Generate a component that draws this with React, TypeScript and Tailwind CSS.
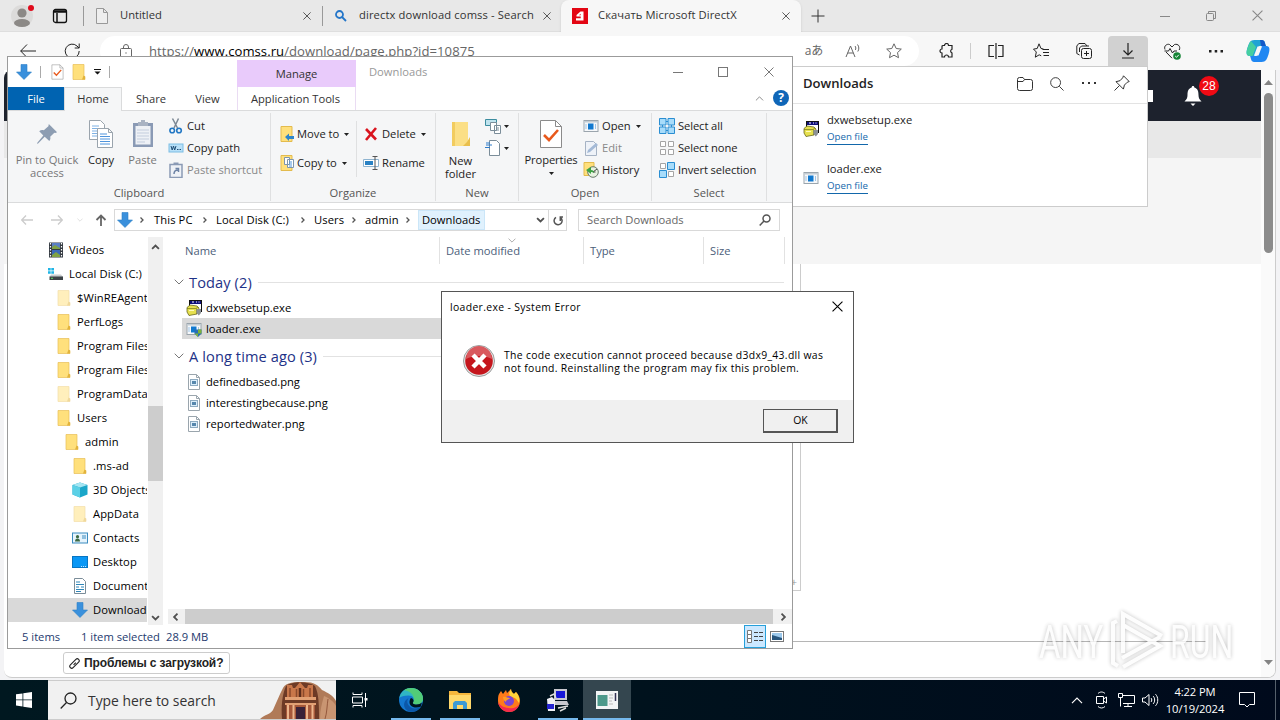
import React from 'react';
import clsx from 'clsx';

interface IconProps {
  className?: string;
}

interface ITreeItem {
  label: string;
  indent: string;
  icon: React.ReactNode;
  selected?: boolean;
}

const CloseIcon: React.FC<IconProps> = ({ className }) => (
  <svg viewBox="0 0 10 10" className={clsx('shrink-0', className)} fill="none" stroke="currentColor">
    <path d="M.5.5l9 9M9.5.5l-9 9" />
  </svg>
);

const Caret: React.FC<IconProps> = ({ className }) => (
  <svg viewBox="0 0 5 3" className={clsx('w-[5px] h-[3px] shrink-0', className)}>
    <path d="M0 0h5L2.500 3z" fill="currentColor" />
  </svg>
);

const DownloadArrow: React.FC<IconProps> = ({ className }) => (
  <svg viewBox="0 0 16 16" className={clsx('w-4 h-4 shrink-0', className)}>
    <path d="M5 .5h6V8h4.500L8 15.500.5 8H5z" fill="#3a90dc" stroke="#2d7fc8" strokeWidth=".6" />
  </svg>
);

const Folder: React.FC<{ faded?: boolean }> = ({ faded }) => (
  <svg viewBox="0 0 16 16" className={clsx('w-4 h-4 shrink-0', faded && 'opacity-50')}>
    <path d="M2 .5h11v12h1V15.500H2z" fill="#ffe07c" stroke="#e8bf56" strokeWidth=".7" />
    <path d="M12.500 11.500l1.500 1v3h-3z" fill="#e2b33c" />
  </svg>
);

const ImageFile = () => (
  <svg viewBox="0 0 16 16" className="w-4 h-4 shrink-0">
    <path d="M2.500.5h8l3 3v12h-11z" fill="#fff" stroke="#9aa5ad" />
    <path d="M10.500.5v3h3" fill="none" stroke="#9aa5ad" />
    <rect x="4.500" y="5.500" width="7" height="6" fill="#dceefa" stroke="#8eabc1" />
    <path d="M6 7h4v3H6z" fill="#5687ad" />
  </svg>
);

const SetupFile = () => (
  <svg viewBox="0 0 16 16" className="w-4 h-4 shrink-0">
    <rect x="3.500" y=".5" width="12" height="11" fill="#fff" stroke="#111" />
    <path d="M4 1h11v3H4z" fill="#10107b" />
    <path d="M6 2h2M10 2h1M12.500 2h1" stroke="#fff" />
    <path d="M1 7.500L4 5l7 1 2 2-2 6-8 1.500L1 12z" fill="#e6e04e" stroke="#55550f" strokeWidth=".7" />
    <path d="M1 8.500h9l2-1.500M10.500 8.500V14" fill="none" stroke="#77771a" strokeWidth=".7" />
    <path d="M3 10.500h5" stroke="#fffbb8" />
    <path d="M10.500 9H15v4l-2.200 2.500-2.300-2.500z" fill="#8c9196" />
  </svg>
);

const AppFile: React.FC<{ shield?: boolean }> = ({ shield }) => (
  <svg viewBox="0 0 16 16" className="w-4 h-4 shrink-0">
    <rect x="1" y="2.500" width="14" height="11" fill="#f6f8fa" stroke="#9ba5ad" />
    <path d="M1 3h14v1.500H1z" fill="#c3ccd3" />
    <rect x="5" y="5.500" width="5.500" height="6" fill="#1179cf" />
    <path d="M3 6v5M12.500 6v5" stroke="#9fc5e6" />
    {shield && (
      <>
        <path d="M8.500 8.500h7v4L12 16l-3.500-3.500z" fill="#2a6cb8" />
        <path d="M12 8.500h3.500v4H12zM8.500 12.500H12V16z" fill="#7cb339" />
      </>
    )}
  </svg>
);

const Chevron: React.FC<IconProps> = ({ className }) => (
  <svg viewBox="0 0 10 6" className={clsx('shrink-0', className)} fill="none" stroke="currentColor">
    <path d="M.7.7L5 5 9.300.7" />
  </svg>
);

const ScrollChevron: React.FC<IconProps> = ({ className }) => (
  <svg viewBox="0 0 10 6" className={clsx('w-[9px] h-[6px] shrink-0', className)} fill="none" stroke="#505050" strokeWidth="2">
    <path d="M1.200.8L5 4.600 8.800.8" />
  </svg>
);

const Tick = () => (
  <svg viewBox="0 0 24 30" className="w-full h-full">
    <path d="M1.500 1.500h15l6 6v21h-21z" fill="#fff" stroke="#8b8b8b" />
    <path d="M16.500 1.500v6h6" fill="none" stroke="#8b8b8b" />
    <path d="M5 16l5 5 9-10" fill="none" stroke="#e8591c" strokeWidth="2.600" />
  </svg>
);

const treeItems: ITreeItem[] = [
  {
    label: 'Videos',
    indent: 'pl-10',
    icon: (
      <svg viewBox="0 0 16 16" className="w-4 h-4 shrink-0">
        <path d="M1 .5h14v15H1z" fill="#333941" />
        <path d="M4 1h8v6H4z" fill="#5b7fc4" />
        <path d="M4 8h8v7H4z" fill="#3b69b8" />
        <path d="M4 5l3-2 5 3v1H4zM4 13l4-3 4 3v2H4z" fill="#80a243" />
        <path d="M2.500 1v14M13.500 1v14" stroke="#fff" strokeWidth="1.200" strokeDasharray="1.500 1.500" />
      </svg>
    ),
  },
  {
    label: 'Local Disk (C:)',
    indent: 'pl-10',
    icon: (
      <svg viewBox="0 0 16 16" className="w-4 h-4 shrink-0">
        <path d="M0 2h2.700v2.500H0zM3.300 2H6v2.500H3.300zM0 5.200h2.700v2.500H0zM3.300 5.200H6v2.500H3.300z" fill="#1fb5e6" />
        <path d="M3 8.500h10l2 2.500H1.500z" fill="#c8ccce" />
        <path d="M1.500 10.500h13.500v3.500H1.500z" fill="#3d4347" />
        <path d="M3 12.300h2" stroke="#5fdf62" />
      </svg>
    ),
  },
  { label: '$WinREAgent', indent: 'pl-12', icon: <Folder faded /> },
  { label: 'PerfLogs', indent: 'pl-12', icon: <Folder /> },
  { label: 'Program Files', indent: 'pl-12', icon: <Folder /> },
  { label: 'Program Files (x86)', indent: 'pl-12', icon: <Folder /> },
  { label: 'ProgramData', indent: 'pl-12', icon: <Folder faded /> },
  { label: 'Users', indent: 'pl-12', icon: <Folder /> },
  { label: 'admin', indent: 'pl-14', icon: <Folder /> },
  { label: '.ms-ad', indent: 'pl-16', icon: <Folder /> },
  {
    label: '3D Objects',
    indent: 'pl-16',
    icon: (
      <svg viewBox="0 0 16 16" className="w-4 h-4 shrink-0">
        <path d="M8 .5l7.500 2.500v9.500L8 15.500.5 12.500V3z" fill="#1aa6c9" />
        <path d="M8 .5l7.500 2.500L8 5.500.5 3z" fill="#a5e5f2" />
        <path d="M.5 3L8 5.500v10L.5 12.500z" fill="#5bd0e6" />
      </svg>
    ),
  },
  { label: 'AppData', indent: 'pl-16', icon: <Folder faded /> },
  {
    label: 'Contacts',
    indent: 'pl-16',
    icon: (
      <svg viewBox="0 0 16 16" className="w-4 h-4 shrink-0">
        <rect x=".5" y="3" width="15" height="10" fill="#e5f3fc" stroke="#3b8bbf" />
        <path d="M3 11.500c0-2 1-3 2.500-3s2.500 1 2.500 3z" fill="#3c6a44" />
        <circle cx="5.500" cy="6.700" r="1.600" fill="#3c6a44" />
        <path d="M10 6h4M10 8h4" stroke="#3b8bbf" />
      </svg>
    ),
  },
  {
    label: 'Desktop',
    indent: 'pl-16',
    icon: (
      <svg viewBox="0 0 16 16" className="w-4 h-4 shrink-0">
        <rect x=".5" y="2.500" width="15" height="11" fill="#0a97f5" stroke="#0875c2" />
        <path d="M9 12.500h5" stroke="#bfe4ff" strokeDasharray="1 1" />
      </svg>
    ),
  },
  {
    label: 'Documents',
    indent: 'pl-16',
    icon: (
      <svg viewBox="0 0 16 16" className="w-4 h-4 shrink-0">
        <path d="M2.500.5h8l3 3v12h-11z" fill="#fff" stroke="#7b8d99" />
        <path d="M4 4h4M4 6.500h8M4 9h3M9 9h3M4 11.500h8M4 13.500h5" stroke="#2f86b8" />
      </svg>
    ),
  },
  { label: 'Downloads', indent: 'pl-16', icon: <DownloadArrow />, selected: true },
];

const TabBar = () => (
  <div className="flex items-center h-8 shrink-0 bg-[#e8e8e8] text-[11.2px] text-[#333] border-b border-[#dedede]">
    <div className="w-[83px] flex items-center">
      <svg viewBox="0 0 24 24" className="w-6 h-6 ml-[10px]">
        <circle cx="12" cy="12" r="11" fill="#dcdbda" />
        <circle cx="12" cy="9" r="4.600" fill="#8c8986" />
        <ellipse cx="12" cy="19" rx="8" ry="4" fill="#8c8986" />
        <circle cx="21" cy="4" r="3" fill="#e00b1c" />
      </svg>
      <svg viewBox="0 0 16 16" className="w-4 h-4 ml-[18px]" fill="none" stroke="#111" strokeWidth="1.300">
        <rect x="1.500" y="1.500" width="13" height="13" rx="2" />
        <path d="M1.500 3.500h13" strokeWidth="2.500" />
        <path d="M5 5v9" strokeWidth="1.500" />
      </svg>
    </div>
    <div className="w-[239px] h-5 flex items-center border-l border-[#999]">
      <svg viewBox="0 0 12 16" className="w-3 h-4 ml-3" fill="#eee" stroke="#999">
        <path d="M.5.5h7l4 4v11H.5zM7.500.5v4h4" />
      </svg>
      <span className="ml-3 flex-1">Untitled</span>
      <CloseIcon className="w-2 h-2 mr-[11px]" />
    </div>
    <div className="w-[239px] h-5 flex items-center border-l border-[#999]">
      <svg viewBox="0 0 12 12" className="w-3 h-3 ml-3" fill="none" stroke="#2476c9" strokeWidth="1.800">
        <circle cx="4.500" cy="4.500" r="3.500" />
        <path d="M7 7l4 4" />
      </svg>
      <span className="ml-3 flex-1 whitespace-nowrap tracking-[0.12px]">directx download comss - Search</span>
      <CloseIcon className="w-2 h-2 mr-[10px]" />
    </div>
    <div className="w-[240px] h-8 flex items-center bg-[#f7f7f7] rounded-t-lg shadow-sm">
      <svg viewBox="0 0 16 16" className="w-4 h-4 ml-[11px]">
        <path d="M0 0h16v16H0z" fill="#e30613" />
        <path d="M4 12.500h7.500V3.500H8.500L4.500 7v1.500h4.200v1.700H4z" fill="#fff" />
        <path d="M7 7.200l1.700-1.500v1.500z" fill="#e30613" />
      </svg>
      <span className="ml-[10px] flex-1 whitespace-nowrap tracking-[0.08px]">Скачать Microsoft DirectX</span>
      <CloseIcon className="w-2 h-2 mr-[11px]" />
    </div>
    <svg viewBox="0 0 14 14" className="w-[14px] h-[14px] ml-[10px]" stroke="#333">
      <path d="M7 .5v13M.5 7h13" />
    </svg>
    <div className="ml-auto flex items-center text-[#888]">
      <svg viewBox="0 0 10 10" className="w-[10px] h-[10px]" stroke="currentColor">
        <path d="M0 5.500h10" />
      </svg>
      <svg viewBox="0 0 10 10" className="w-[10px] h-[10px] ml-9" fill="none" stroke="currentColor">
        <rect x=".5" y="2.500" width="7" height="7" rx="1" />
        <path d="M2.500 2V.5h7v7H8" />
      </svg>
      <CloseIcon className="w-[11px] h-[11px] ml-9 mr-[17px]" />
    </div>
  </div>
);

const Toolbar = () => (
  <div className="flex h-[38px] shrink-0 items-center bg-[#f7f7f7] text-[#222]">
    <svg viewBox="0 0 16 14" className="w-4 h-[14px] ml-5" fill="none" stroke="currentColor">
      <path d="M7 .5L.7 7 7 13.500M.7 7H16" />
    </svg>
    <svg viewBox="0 0 16 16" className="w-4 h-4 ml-7" fill="none" stroke="currentColor">
      <path d="M15.200 8A7 7 0 1 1 13 3l2 2M15.200.5V5h-4.500" />
    </svg>
    <div className="ml-5 w-[819px] h-[30px] bg-white rounded-full flex items-center text-[#666]">
      <svg viewBox="0 0 12 14" className="w-3 h-[14px] ml-5" fill="none" stroke="currentColor">
        <rect x=".5" y="4.500" width="11" height="9" rx="1" />
        <path d="M3.500 4.500V3a2.500 2.500 0 0 1 5 0v1.500M6 8.300v1.400" />
      </svg>
      <span className="ml-[17px] mt-px flex-1 text-[13.100px] tracking-[0.05px]">
        https://<span className="text-black">www.comss.ru</span>/download/page.php?id=10875
      </span>
      <span className="w-10 text-center text-[12px]">aあ</span>
      <span className="w-10 flex justify-center">
        <svg viewBox="0 0 18 16" className="w-[18px] h-4" fill="none" stroke="currentColor">
          <path d="M1 14L5.500 3 10 14M2.700 10h5.600M10 3c1 1 1 3 .3 4M12.500 1.500c1.700 2 1.700 5 .3 7" />
        </svg>
      </span>
      <span className="w-10 flex justify-center mr-[5px]">
        <svg viewBox="0 0 16 16" className="w-4 h-4" fill="none" stroke="currentColor">
          <path d="M8 .8l2.200 4.700 5.100.6-3.800 3.500 1 5.100L8 12.200l-4.500 2.500 1-5.100L.7 6.100l5.100-.6z" />
        </svg>
      </span>
    </div>
    <div className="w-[52px] h-4 pl-[5px] border-r border-[#ccc] flex items-center justify-center">
      <svg viewBox="0 0 16 16" className="w-4 h-4" fill="none" stroke="currentColor" strokeWidth="1.200">
        <path d="M4 2.500h1.500a2 2 0 0 1 4 0H13v3.700a2 2 0 0 0 0 3.800v4H9.500a2 2 0 0 0-4 0H3V10a2 2 0 1 1 0-4V3.500a1 1 0 0 1 1-1z" />
      </svg>
    </div>
    <div className="w-[49px] flex justify-center">
      <svg viewBox="0 0 16 16" className="w-4 h-4" fill="none" stroke="currentColor" strokeWidth="1.200">
        <path d="M6 2.500H1v11h5M10 2.500h5v11h-5M8 0v16" />
      </svg>
    </div>
    <div className="w-[41px] flex justify-center">
      <svg viewBox="0 0 16 16" className="w-4 h-4" fill="none" stroke="currentColor">
        <path d="M10.500 6L8 5.500 6 .8 4.200 5.500l-3.700.6L3.300 9l-1 5.200 3.900-2.400 2 1M9.500 6.500H16M10 9.500h6M10.500 12.500H16" />
      </svg>
    </div>
    <div className="w-[47px] pr-[2px] flex justify-center">
      <svg viewBox="0 0 16 16" className="w-4 h-4" fill="none" stroke="currentColor">
        <rect x="5.500" y="5.500" width="10" height="10" rx="2" />
        <path d="M10.500 8v5M8 10.500h5M3.500 12L.8 10.500V3l2-2.500H9l2 2.500M3.500 9V5l2-2H13" />
      </svg>
    </div>
    <div className="w-10 h-[30px] bg-[#d1d1d1] rounded-t-sm flex items-center justify-center">
      <svg viewBox="0 0 14 16" className="w-[14px] h-4" fill="none" stroke="currentColor" strokeWidth="1.200">
        <path d="M7 0v11.500M2.500 7.500L7 12l4.500-4.500M1 15h12" />
      </svg>
    </div>
    <div className="w-[48px] flex justify-center">
      <svg viewBox="0 0 17 17" className="w-[17px] h-[17px]" fill="none" stroke="currentColor">
        <path d="M1 6.500C-.5 3 3 .5 5.500 1.500L8 4l2.500-2.500C14 .5 17 3.500 15.200 7M2 9l6 6.200M.5 8h4L6 5.500 8.500 10 10 8h3" />
        <circle cx="13" cy="13" r="3.800" fill="#168536" stroke="none" />
        <path d="M11.200 13l1.300 1.300 2.300-2.500" stroke="#fff" />
      </svg>
    </div>
    <div className="w-10 flex justify-center">
      <svg viewBox="0 0 14 3" className="w-[14px] h-[3px]" fill="currentColor">
        <path d="M0 0h2.500v2.500H0zM5.700 0h2.500v2.500H5.700zM11.500 0H14v2.500h-2.500z" />
      </svg>
    </div>
    <svg viewBox="0 0 24 24" className="w-6 h-6 ml-[10px]">
      <path d="M8.500 1H16c3 0 3 4 4 6h-5c-3 0-3.500 2-4.500 5s-1 5-4 5H3.500c-3.500 0-3.500-4-2-8.500S4 1 8.500 1z" fill="#1fa3d4" />
      <path d="M1 11c1-3 2-7 4-9l5 6-3.500 9h-3c-2.500 0-3.500-3-2.500-6z" fill="#45cfa0" />
      <path d="M15.500 23H8c-3 0-3-4-4-6h5c3 0 3.500-2 4.500-5s1-5 4-5h3c3.500 0 3.500 4 2 8.500S20 23 15.500 23z" fill="#2087f2" />
      <path d="M11.500 7.500H16l-3.500 9H8z" fill="#f7f7f7" />
      <path d="M14 1h2c3 0 3 4 4 6h-5z" fill="#1458c8" />
    </svg>
  </div>
);

const WebPage = () => (
  <div className="flex h-[610px] px-[4px] bg-[#f3f3f5]">
    <div className="flex h-[608px] w-[1272px] bg-white rounded-b-lg overflow-hidden border-b border-r border-[#ccc]">
      <div className="w-[1257px] flex flex-col">
        <div className="h-[51px] bg-[#1d222d] rounded-tl-lg flex justify-end items-center">
          <div className="w-[6px] h-3 bg-white" />
          <svg viewBox="0 0 18 20" className="w-[18px] h-5 ml-[31px] mr-[59px]" fill="#fff">
            <path d="M9 0c1 0 1.300.6 1.300 1.500C14 2.600 14.500 6 14.500 9c0 3 1 4.500 3 6.500H.5c2-2 3-3.500 3-6.500 0-3 .5-6.400 4.200-7.500C7.700.6 8 0 9 0zM6.500 17.500h5L9 20z" />
          </svg>
        </div>
        <div className="h-[37px] bg-[#e8e8e8]" />
        <div className="h-[106px] bg-[#f5f5f5]" />
        <div className="ml-[10px] w-[787px] h-[327px] border-r border-b border-[#ccc] flex items-end justify-end text-[#999] text-[11px] pr-[3px]">
          +
        </div>
        <div className="ml-[10px] w-[1192px] h-[51px] border-b border-[#b5b5b5]" />
        <div className="ml-[59px] mt-[10px] w-[167px] h-[22px] border border-[#ccc] rounded-[3px] flex items-center font-['Liberation_Sans',sans-serif] font-bold text-[12px] text-[#222]">
          <svg viewBox="0 0 12 12" className="w-[11px] h-[11px] ml-[5px] mr-[4px]" fill="none" stroke="#222" strokeWidth="1.200">
            <path d="M5 7.500L7.500 5M4.500 4.500L1.500 7.500a2.100 2.100 0 0 0 3 3L7.500 7.500M7.500 7.500l3-3a2.100 2.100 0 0 0-3-3L4.500 4.500" />
          </svg>
          <span className="whitespace-nowrap tracking-[-0.12px]">Проблемы с загрузкой?</span>
        </div>
      </div>
      <div className="w-[14px] bg-[#fafafa] flex flex-col items-center pt-[10px]">
        <svg viewBox="0 0 9 5" className="w-[9px] h-[5px]" fill="#848484">
          <path d="M0 5h9L4.500 0z" />
        </svg>
        <div className="w-[9px] h-[160px] mt-2 rounded-full bg-[#8b8b8b]" />
        <svg viewBox="0 0 9 5" className="w-[9px] h-[5px] mt-auto mb-[12px]" fill="#848484">
          <path d="M0 0h9L4.500 5z" />
        </svg>
      </div>
    </div>
  </div>
);

const DownloadEntry: React.FC<{ name: string; icon: React.ReactNode }> = ({ name, icon }) => (
  <div className="flex items-center h-[49px]">
    {icon}
    <div className="ml-2 flex flex-col items-start">
      <span className="text-[11.2px] leading-4 text-[#222]">{name}</span>
      <span className="mt-[2px] h-[15px] text-[9.7px] leading-[14px] text-[#1267ab] border-b border-[#1267ab]">
        Open file
      </span>
    </div>
  </div>
);

const DownloadsPopup = () => (
  <div className="absolute left-[787px] top-[66px] w-[361px] h-[141px] bg-white border border-[#ccc] pl-[15px]">
    <div className="-ml-[15px] pl-[15px] h-[37px] border-b border-[#e3e3e3] flex items-center text-[#333]">
      <span className="text-[13.1px] font-semibold text-[#222] pb-[3px]">Downloads</span>
      <svg viewBox="0 0 16 14" className="w-4 h-[14px] ml-auto mb-[2px]" fill="none" stroke="currentColor">
        <path d="M.5 2.500a2 2 0 0 1 2-2H6l1.500 2h6a2 2 0 0 1 2 2v7a2 2 0 0 1-2 2h-11a2 2 0 0 1-2-2zM.5 4.500H6l1.500-2" />
      </svg>
      <svg viewBox="0 0 15 15" className="w-[14px] h-[14px] ml-[17px] mb-[3px]" fill="none" stroke="currentColor">
        <circle cx="6" cy="6" r="5.300" />
        <path d="M10 10l4.500 4.500" />
      </svg>
      <svg viewBox="0 0 14 2" className="w-[14px] h-[2px] ml-[18px] mb-[5px]" fill="currentColor">
        <path d="M0 0h2v2H0zM6 0h2v2H6zM12 0h2v2h-2z" />
      </svg>
      <svg viewBox="0 0 16 16" className="w-4 h-4 ml-[18px] mr-[17px] mb-[4px]" fill="none" stroke="currentColor">
        <path d="M9.500.8l5.700 5.700-2 .8-2.800 2.800-1 4L2 6.700l4-1L8.700 2.800zM5.500 10.500L.5 15.500" />
      </svg>
    </div>
    <DownloadEntry name="dxwebsetup.exe" icon={<SetupFile />} />
    <DownloadEntry name="loader.exe" icon={<AppFile />} />
  </div>
);

const RibbonGroup: React.FC<{ title: string; className: string; children: React.ReactNode }> = ({
  title,
  className,
  children,
}) => (
  <div className={clsx('flex flex-col h-[88px] mt-[2px] border-r border-[#dfe0e1]', className)}>
    <div className="flex h-[73px]">{children}</div>
    <span className="text-center leading-[14px] text-[#555]">{title}</span>
  </div>
);

const RibbonRow: React.FC<{
  icon: React.ReactNode;
  label: string;
  caret?: boolean;
  muted?: boolean;
}> = ({ icon, label, caret, muted }) => (
  <div className={clsx('flex items-center h-[22px] whitespace-nowrap', muted && 'text-[#888]')}>
    {icon}
    <span className="ml-[3px]">{label}</span>
    {caret && <Caret className="ml-[5px]" />}
  </div>
);

const Grid: React.FC<{ variant: 'all' | 'none' | 'invert' }> = ({ variant }) => {
  if (variant === 'all') {
    return (
      <svg viewBox="0 0 16 16" className="w-4 h-4 shrink-0" fill="#a8dcfa" stroke="#2a8ed2">
        <path d="M.5.5h6.500V7H.5zM9 .5h6.500V7H9zM.5 9h6.500v6.500H.5zM9 9h6.500v6.500H9z" />
        <path d="M7 3.500h2M7 12.500h2M3.500 7v2M12.500 7v2" />
      </svg>
    );
  }
  if (variant === 'none') {
    return (
      <svg viewBox="0 0 16 16" className="w-4 h-4 shrink-0" fill="#fff" stroke="#a5a5a5">
        <path d="M1.500 1.500h5v5h-5zM9.500 1.500h5v5h-5zM1.500 9.500h5v5h-5zM9.500 9.500h5v5h-5z" />
      </svg>
    );
  }
  return (
    <svg viewBox="0 0 16 16" className="w-4 h-4 shrink-0">
      <path d="M1.500 1.500h5v5h-5zM9.500 9.500h5v5h-5z" fill="#fff" stroke="#a5a5a5" />
      <path d="M8.500.5h7v7h-7zM.5 8.500h7v7h-7z" fill="#a8dcfa" stroke="#2a8ed2" />
    </svg>
  );
};

const Ribbon = () => (
  <div className="flex h-[93px] shrink-0 bg-[#f5f6f7] border-y border-[#dadbdc] text-[11.2px] text-[#222]">
    <RibbonGroup title="Clipboard" className="w-[263px]">
      <div className="w-[78px] flex flex-col items-center text-center text-[#777] leading-[13px]">
        <svg viewBox="0 0 24 24" className="w-[22px] h-[22px] mt-[10px] mb-[8px]" fill="#8d9db2">
          <path d="M14 1l9 9-2 1-1-.5-4.500 4.500c.5 2 .2 3-1 4.500L9.500 15 2 22.500 1 22l7-8.500-4.500-4.500C5 7.700 6.500 7.500 8.500 8L13.500 3.500z" />
        </svg>
        Pin to Quick
        <br />
        access
      </div>
      <div className="w-[30px] flex flex-col items-center">
        <svg viewBox="0 0 24 28" className="w-6 h-7 mt-[7px] mb-[4px]" fill="#fff" stroke="#9aa4ad">
          <path d="M.5.5h11l4 4v15H.5z" />
          <path d="M3 6h7M3 8.500h9M3 11h9M3 13.500h9M3 16h9" stroke="#7fb2e5" />
          <path d="M8.500 8.500h11l4 4v15h-15zM19.500 8.500v4h4" />
          <path d="M11 14h7M11 16.500h10M11 19h10M11 21.500h10M11 24h10" stroke="#4f94dc" />
        </svg>
        Copy
      </div>
      <div className="w-[53px] flex flex-col items-center text-[#777]">
        <svg viewBox="0 0 22 28" className="w-[22px] h-7 mt-[7px] mb-[4px]">
          <rect x="1" y="3" width="20" height="24" fill="#8a9ab5" />
          <rect x="3.500" y="6" width="15" height="18.500" fill="#eef1f6" />
          <path d="M6 2h3V0h4v2h3v4H6z" fill="#a9b3c3" />
          <path d="M5 10h12M5 13h12M5 16h12M5 19h12M5 22h8" stroke="#c3cddd" />
        </svg>
        Paste
      </div>
      <div className="flex flex-col pt-[2px] -ml-px">
        <RibbonRow
          label="Cut"
          icon={
            <svg viewBox="0 0 16 16" className="w-4 h-4" fill="none">
              <path d="M4.500.5l5 9.500M10.500.5L6 10" stroke="#7c8894" strokeWidth="1.500" />
              <circle cx="4.200" cy="12.500" r="2.300" stroke="#2177c4" strokeWidth="1.600" />
              <circle cx="11" cy="12.500" r="2.300" stroke="#2177c4" strokeWidth="1.600" />
            </svg>
          }
        />
        <RibbonRow
          label="Copy path"
          icon={
            <svg viewBox="0 0 16 16" className="w-4 h-4" fill="none">
              <rect x="1" y="4" width="14" height="8" fill="#b8e0f8" stroke="#7cbde4" />
              <path d="M3 6l1.200 4L5.500 6l1.200 4L8 6M9 9.500h1.500M11.500 9.500H13" stroke="#1d4d75" />
            </svg>
          }
        />
        <RibbonRow
          label="Paste shortcut"
          muted
          icon={
            <svg viewBox="0 0 16 16" className="w-4 h-4" fill="none">
              <path d="M2 2.500h12v13H2z" fill="#eef1f6" stroke="#8a9ab5" strokeWidth="1.500" />
              <path d="M5.500.5h5V3h-5z" fill="#8a9ab5" />
              <path d="M6 12c0-3 1-4 4-4M7.500 6.500H10.500V10" stroke="#6d83a5" strokeWidth="1.500" />
            </svg>
          }
        />
      </div>
    </RibbonGroup>

    <RibbonGroup title="Organize" className="w-[165px]">
      <div className="w-[85px] shrink-0 pl-[9px] pt-[10px] flex flex-col gap-[7px]">
        <RibbonRow
          label="Move to"
          caret
          icon={
            <svg viewBox="0 0 14 16" className="w-[14px] h-4 shrink-0">
              <path d="M1 .5h11v15H1z" fill="#ffe07c" stroke="#e3bb4e" />
              <path d="M5 11l4-3.500V10h5v3H9v2z" fill="#2c85cc" />
            </svg>
          }
        />
        <RibbonRow
          label="Copy to"
          caret
          icon={
            <svg viewBox="0 0 14 16" className="w-[14px] h-4 shrink-0">
              <path d="M1 .5h11v15H1z" fill="#ffe07c" stroke="#e3bb4e" />
              <path d="M4.500 2.500h5v7h-5zM7.500 4.500h6v8h-6z" fill="#fff" stroke="#7d95ac" />
              <path d="M9 7h3M9 9h3M9 11h3" stroke="#4f94dc" />
            </svg>
          }
        />
      </div>
      <div className="h-[56px] mt-[8px] pt-[2px] border-l border-[#dfe0e1] pl-[6px] flex flex-col gap-[7px]">
        <RibbonRow
          label="Delete"
          caret
          icon={
            <svg viewBox="0 0 16 16" className="w-4 h-4 shrink-0" stroke="#d9141e" strokeWidth="2.600">
              <path d="M3 3l10 10.500M13 2L3 14" />
            </svg>
          }
        />
        <RibbonRow
          label="Rename"
          icon={
            <svg viewBox="0 0 16 16" className="w-4 h-4 shrink-0" fill="none">
              <path d="M.5 4.500h15v7H.5z" fill="#fff" stroke="#8fb4d0" />
              <path d="M2 6h8v4H2z" fill="#2a82c4" />
              <path d="M9.500 1.500h5M12 1.500v13M9.500 14.500h5" stroke="#555" />
            </svg>
          }
        />
      </div>
    </RibbonGroup>

    <RibbonGroup title="New" className="w-[83px]">
      <div className="w-[49px] flex flex-col items-center text-center leading-[13px]">
        <svg viewBox="0 0 20 26" className="w-5 h-[26px] mt-[8px] mb-[7px]">
          <path d="M1 1h16v24H1z" fill="#fbdf86" />
          <path d="M1 1h3v24H1z" fill="#f2cc5f" />
          <path d="M16 21l3-5v9h-7z" fill="#e9bf4c" />
        </svg>
        New
        <br />
        folder
      </div>
      <div className="pt-[2px]">
        <div className="flex items-center h-[22px]">
          <svg viewBox="0 0 16 16" className="w-4 h-4" fill="#fff" stroke="#7b8d99">
            <path d="M.5 1.500h11v6H.5z" fill="#bfe3ee" stroke="#3c8c9f" />
            <path d="M5.500 4.500h6v8h-6zM9.500 7.500h6v8h-6z" />
            <path d="M11 10h3M11 12h3" />
          </svg>
          <Caret className="ml-[3px]" />
        </div>
        <div className="flex items-center h-[22px]">
          <svg viewBox="0 0 16 16" className="w-4 h-4" fill="#fff" stroke="#7b8d99">
            <path d="M4.500.5h7l3 3v12h-10z" />
            <path d="M1 5h6M0 7.500h5M1 3l4 0" stroke="#2e7ccb" />
          </svg>
          <Caret className="ml-[3px]" />
        </div>
      </div>
    </RibbonGroup>

    <RibbonGroup title="Open" className="w-[133px]">
      <div className="w-[64px] flex flex-col items-center">
        <div className="w-6 h-[30px] mt-[6px] mb-[3px]">
          <Tick />
        </div>
        <span className="tracking-[-0.1px]">Properties</span>
        <Caret className="mt-[3px]" />
      </div>
      <div className="pt-[2px]">
        <RibbonRow label="Open" caret icon={<AppFile />} />
        <RibbonRow
          label="Edit"
          muted
          icon={
            <svg viewBox="0 0 16 16" className="w-4 h-4 shrink-0">
              <path d="M2.500 1.500h8l3 3v11h-11z" fill="#eef2f8" stroke="#a6b3c4" />
              <path d="M4 13l1-3 8-7 2 2-8 7z" fill="#a3b9d6" />
            </svg>
          }
        />
        <RibbonRow
          label="History"
          icon={
            <svg viewBox="0 0 16 16" className="w-4 h-4 shrink-0">
              <path d="M1 .5h10v13H1z" fill="#ffe07c" stroke="#e3bb4e" />
              <circle cx="10" cy="10" r="5.300" fill="#e7f2e0" stroke="#687b6b" />
              <path d="M10 10l4-3M10 10h2.500" stroke="#444" />
              <path d="M3 8l5-3v3c2 0 3 1 3 3-1-1-2-1-3-1v2z" fill="#3da343" />
            </svg>
          }
        />
      </div>
    </RibbonGroup>

    <RibbonGroup title="Select" className="w-[115px]">
      <div className="pl-[7px] pt-[2px] tracking-[-0.1px]">
        <RibbonRow label="Select all" icon={<Grid variant="all" />} />
        <RibbonRow label="Select none" icon={<Grid variant="none" />} />
        <RibbonRow label="Invert selection" icon={<Grid variant="invert" />} />
      </div>
    </RibbonGroup>
  </div>
);

const crumbs = [
  { label: 'This PC', width: 'w-[62px]' },
  { label: 'Local Disk (C:)', width: 'w-[98px]' },
  { label: 'Users', width: 'w-[51px]' },
  { label: 'admin', width: 'w-[54px]' },
];

const AddressRow = () => (
  <div className="flex h-[34px] shrink-0 items-center text-[11.2px]">
    <div className="w-[106px] flex items-center text-[#ccc]">
      <svg viewBox="0 0 12 10" className="w-3 h-[10px] ml-[13px]" fill="none" stroke="currentColor" strokeWidth="1.300">
        <path d="M5 .5L.7 5 5 9.500M.7 5H12" />
      </svg>
      <svg viewBox="0 0 12 10" className="w-3 h-[10px] ml-[18px]" fill="none" stroke="currentColor" strokeWidth="1.300">
        <path d="M7 .5L11.300 5 7 9.500M11.300 5H0" />
      </svg>
      <Chevron className="w-[6px] h-[4px] ml-[14px]" />
      <svg viewBox="0 0 12 12" className="w-3 h-3 ml-[12px] text-[#666]" fill="none" stroke="currentColor" strokeWidth="1.800">
        <path d="M1.500 6L6 1.500 10.500 6M6 1.500V12" />
      </svg>
    </div>
    <div className="w-[453px] h-[22px] border border-[#d9d9d9] flex items-center">
      <DownloadArrow className="ml-[2px]" />
      <svg viewBox="0 0 4 6" className="w-1 h-[6px] ml-[7px] mr-[10px]" fill="none" stroke="#555" strokeWidth="1.300">
        <path d="M.5.5L3 3 .5 5.500" />
      </svg>
      {crumbs.map((c) => (
        <div key={c.label} className={clsx('flex items-center justify-between whitespace-nowrap pr-[9px] tracking-[0.1px]', c.width)}>
          {c.label}
          <svg viewBox="0 0 4 6" className="w-1 h-[6px]" fill="none" stroke="#555" strokeWidth="1.300">
            <path d="M.5.5L3 3 .5 5.500" />
          </svg>
        </div>
      ))}
      <div className="-ml-[1px] h-5 px-[3px] w-[67px] bg-[#e0f1fd] border border-[#cbe6f8] flex items-center">Downloads</div>
      <ScrollChevron className="ml-auto mr-[3px]" />
      <div className="w-[18px] h-5 border-l border-[#d9d9d9] flex items-center justify-center">
        <svg viewBox="0 0 10 11" className="w-[10px] h-[11px]" fill="none" stroke="#555" strokeWidth="1.500">
          <path d="M3 2.300a4 4 0 1 0 4.500.2M7.300 6V2h3" />
        </svg>
      </div>
    </div>
    <div className="ml-[11px] w-[202px] h-[22px] border border-[#d9d9d9] flex items-center pl-2 pr-[8px] text-[#666]">
      <span className="flex-1">Search Downloads</span>
      <svg viewBox="0 0 12 12" className="w-3 h-3" fill="none" stroke="#555" strokeWidth="1.500">
        <circle cx="7.500" cy="4.500" r="3.500" />
        <path d="M5 7L.7 11.500" />
      </svg>
    </div>
  </div>
);

const FileRow: React.FC<{ name: string; icon: React.ReactNode; selected?: boolean }> = ({
  name,
  icon,
  selected,
}) => (
  <div className={clsx('ml-[18px] h-[21px] pl-1 flex items-center', selected && 'bg-[#d9d9d9]')}>
    {icon}
    <span className="ml-1 pt-px">{name}</span>
  </div>
);

const GroupHeader: React.FC<{ title: string }> = ({ title }) => (
  <div className="flex items-center mr-2 ml-[10px] text-[#1e3287] text-[14.6px] leading-[20px]">
    <Chevron className="w-[10px] h-[6px] text-[#777]" />
    <span className="ml-[5px] whitespace-nowrap tracking-[0.1px]">{title}</span>
    <div className="ml-[6px] flex-1 h-px bg-[#e2e2e2]" />
  </div>
);

const ExplorerWindow = () => (
  <div className="absolute left-[7px] top-[56px] w-[786px] h-[593px] bg-white border border-[#9b9b9b] flex flex-col">
    <div className="flex h-[30px] shrink-0 text-[11.2px]">
      <div className="w-[229px] flex items-center">
        <DownloadArrow className="ml-2" />
        <div className="ml-2 w-px h-3 bg-[#aaa]" />
        <div className="ml-[10px] w-[13px] h-4">
          <Tick />
        </div>
        <div className="ml-[7px] flex">
          <Folder />
        </div>
        <svg viewBox="0 0 7 6" className="w-[7px] h-[6px] ml-[7px]">
          <path d="M0 0h7v1H0zM.5 2.500h6L3.500 5.500z" fill="#111" />
        </svg>
        <div className="ml-2 w-px h-3 bg-[#aaa]" />
      </div>
      <div className="w-[119px] mt-[3px] pt-px bg-[#e9cbfb] flex items-center justify-center text-[#333]">Manage</div>
      <span className="ml-[13px] mt-[7px] text-[#999]">Downloads</span>
      <div className="ml-auto flex items-center text-[#777]">
        <svg viewBox="0 0 10 10" className="w-[10px] h-[10px]" stroke="currentColor">
          <path d="M0 5.500h10" />
        </svg>
        <div className="w-[10px] h-[10px] ml-[35px] border border-[#777]" />
        <CloseIcon className="w-[10px] h-[10px] ml-9 mr-[18px]" />
      </div>
    </div>
    <div className="flex h-[23px] shrink-0 text-[11.2px] text-[#333]">
      <div className="w-[56px] bg-[#0063b1] text-white flex items-center justify-center pt-px">File</div>
      <div className="w-[58px] bg-[#f5f6f7] border-x border-t border-[#dadbdc] h-6 relative flex items-center justify-center">
        Home
      </div>
      <div className="w-[58px] flex items-center justify-center pt-px">Share</div>
      <div className="w-[57px] flex items-center justify-center pr-[2px] pt-px">View</div>
      <div className="w-[119px] border-x border-[#eadcf3] flex items-center justify-center pr-[2px] pt-px">Application Tools</div>
      <Chevron className="w-[9px] h-[5px] ml-auto mt-[9px] rotate-180 text-[#777]" />
      <div className="ml-[9px] mr-[3px] mt-[3px] w-4 h-4 rounded-full bg-[#0f66b8] text-white font-bold text-[12px] leading-4 text-center">
        ?
      </div>
    </div>
    <Ribbon />
    <AddressRow />
    <div className="flex h-[388px] shrink-0 text-[11.2px]">
      <div className="w-[139px] pt-px overflow-hidden tracking-[0.1px]">
        {treeItems.map((item) => (
          <div
            key={item.label}
            className={clsx('h-6 flex items-center whitespace-nowrap', item.indent, item.selected && 'bg-[#d9d9d9]')}
          >
            {item.icon}
            <span className="ml-[5px]">{item.label}</span>
          </div>
        ))}
      </div>
      <div className="ml-px w-[15px] bg-[#f0f0f0] flex flex-col items-center">
        <ScrollChevron className="mt-[7px] rotate-180" />
        <div className="mt-[156px] h-[75px] w-full bg-[#cdcdcd]" />
        <ScrollChevron className="mt-auto mb-[4px]" />
      </div>
      <div className="flex-1 ml-px flex flex-col">
        <div className="flex h-[27px] items-center text-[#4c607a]">
          <div className="w-[276px] h-full border-r border-[#e2e2e2] flex items-center pl-[21px] pt-[2px]">Name</div>
          <div className="w-[144px] h-full border-r border-[#e2e2e2] relative flex items-center pl-[6px] pt-[2px]">
            Date modified
            <Chevron className="absolute left-[68px] top-px w-2 h-[5px] text-[#999]" />
          </div>
          <div className="w-[120px] h-full border-r border-[#e2e2e2] flex items-center pl-[6px] pt-[2px]">Type</div>
          <div className="w-[81px] h-full border-r border-[#e2e2e2] flex items-center pl-[6px] pt-[2px]">Size</div>
        </div>
        <div className="h-[33px] pt-[8px]">
          <GroupHeader title="Today (2)" />
        </div>
        <FileRow name="dxwebsetup.exe" icon={<SetupFile />} />
        <FileRow name="loader.exe" icon={<AppFile shield />} selected />
        <div className="h-[32px] pt-[7px]">
          <GroupHeader title="A long time ago (3)" />
        </div>
        <FileRow name="definedbased.png" icon={<ImageFile />} />
        <FileRow name="interestingbecause.png" icon={<ImageFile />} />
        <FileRow name="reportedwater.png" icon={<ImageFile />} />
        <div className="mt-auto mb-px ml-1 h-[15px] bg-[#f0f0f0] flex items-center">
          <ScrollChevron className="ml-[3px] rotate-90" />
          <div className="ml-[5px] w-[588px] h-full bg-[#cdcdcd]" />
          <ScrollChevron className="ml-[6px] -rotate-90" />
        </div>
      </div>
    </div>
    <div className="flex flex-1 items-center text-[11.2px] text-[#1e3a6e]">
      <span className="ml-[14px] w-[59px] pt-px">5 items</span>
      <span className="w-[85px] whitespace-nowrap pt-px">1 item selected</span>
      <span className="pt-px">28.9 MB</span>
      <div className="ml-auto w-[22px] h-[23px] border border-[#26a0da] bg-[#cce8ff] flex items-center justify-center">
        <svg viewBox="0 0 16 14" className="w-4 h-[14px]" fill="#fff" stroke="#777">
          <path d="M.5.5h4v4h-4zM.5 4.500h4v4h-4zM.5 8.500h4v4h-4z" />
          <path d="M7 2.500h4M12 2.500h4M7 6.500h4M12 6.500h4M7 10.500h4M12 10.500h4" stroke="#444" />
        </svg>
      </div>
      <svg viewBox="0 0 14 12" className="w-[14px] h-3 ml-1 mr-[8px]">
        <rect x=".5" y=".5" width="13" height="10" fill="#fff" stroke="#777" />
        <path d="M2 2h10v7H2z" fill="#9cc9ec" />
        <path d="M2 4l10 3v2H2z" fill="#27557d" />
      </svg>
    </div>
  </div>
);

const ErrorDialog = () => (
  <div className="absolute left-[441px] top-[291px] w-[413px] h-[152px] bg-white border border-[#555] flex flex-col text-[10.4px] text-black">
    <div className="flex h-[29px] items-center pl-2 pr-[10px]">
      <span className="flex-1 pt-[2px] tracking-[0.35px]">loader.exe - System Error</span>
      <CloseIcon className="w-[11px] h-[11px]" />
    </div>
    <div className="flex h-[79px] pl-[21px]">
      <svg viewBox="0 0 32 32" className="w-8 h-8 mt-[24px]">
        <circle cx="16" cy="16" r="15.500" fill="#e4e4e4" stroke="#9d9d9d" />
        <circle cx="16" cy="16" r="13.800" fill="#c5161d" />
        <path d="M3 14a13 13 0 0 1 26 0c-7-4-19-4-26 0z" fill="#d9595e" />
        <path d="M10 10l12 12M22 10L10 22" stroke="#fff" strokeWidth="4.500" />
      </svg>
      <p className="ml-[9px] mt-[28px] leading-[13px] whitespace-nowrap tracking-[0.32px]">
        The code execution cannot proceed because d3dx9_43.dll was
        <br />
        not found. Reinstalling the program may fix this problem.
      </p>
    </div>
    <div className="flex-1 bg-[#f0f0f0] flex justify-end pt-[9px] pr-[15px]">
      <div className="w-[75px] h-[24px] border border-[#555] border-r-2 border-b-2 bg-[#f0f0f0] flex items-center justify-center pt-px pl-px">
        OK
      </div>
    </div>
  </div>
);

const Watermark = () => (
  <div className="absolute left-[1039px] top-[608px] w-[200px] h-[66px] flex items-center text-[#fdfdfd] opacity-80 font-['Roboto',sans-serif] text-[47px] leading-none drop-shadow-[0_0_2px_rgba(0,0,0,0.3)]">
    <span className="w-[66px] origin-left scale-x-[0.7]">ANY</span>
    <svg viewBox="0 0 60 64" className="w-[60px] h-16 shrink-0" fill="none" stroke="currentColor" strokeWidth="4">
      <path d="M18 44V5l39 22M18 16l37 21L18 58M12 12l-4 2v40l5 3M17 49l38-21" />
    </svg>
    <span className="ml-[5px] w-[66px] origin-left scale-x-[0.68]">RUN</span>
  </div>
);

const TaskButton: React.FC<{ className: string; open?: boolean; active?: boolean; children: React.ReactNode }> = ({
  className,
  open,
  active,
  children,
}) => (
  <div className={clsx('h-10 flex flex-col items-center justify-end', className, active && 'bg-[#34464f]')}>
    <div className="h-[38px] flex items-center pt-[2px]">{children}</div>
    <div className={clsx('h-[2px]', open && 'bg-[#76b9ed]', active ? 'w-full' : 'w-10')} />
  </div>
);

const Taskbar = () => (
  <div className="flex h-10 shrink-0 items-center bg-linear-to-r from-[#001820] via-[#00121d] to-[#000a1c] text-white">
    <div className="w-12 flex justify-center">
      <svg viewBox="0 0 16 16" className="w-4 h-4" fill="#fff">
        <path d="M0 2.300L6.500 1.400v6.100H0zM7.300 1.300L16 0v7.500H7.300zM0 8.300h6.500v6.200L0 13.600zM7.300 8.300H16V16l-8.700-1.300z" />
      </svg>
    </div>
    <div className="w-72 h-10 bg-[#f1f1f1] border-y border-[#ccc] flex items-center text-[#333]">
      <svg viewBox="0 0 17 17" className="w-[17px] h-[17px] ml-3" fill="none" stroke="#222" strokeWidth="1.300">
        <circle cx="10.500" cy="6.500" r="5.500" />
        <path d="M6.500 10.500L.7 16.500" />
      </svg>
      <span className="ml-[11px] flex-1 pt-[2px] text-[13.9px]">Type here to search</span>
      <svg viewBox="0 0 76 38" className="w-[76px] h-[38px]">
        <path d="M0 38c5-5 10-4 13-9 3-7 6-14 10-22 3-6 12-6 22-6 9 0 13 3 17 8 6 3 11 5 14 11v18z" fill="#b07a58" />
        <path d="M22 38c-1-12 0-24 4-33 6-5 22-5 29 0 4 8 4 20 4 33z" fill="#6d3a26" />
        <path d="M27 17V4h5l1 3h2l5-6 5 6h2l1-3h5v13z" fill="#c9774a" />
        <path d="M25 16h31v3H25zM25 22h31v2H25z" fill="#e2a074" />
        <path d="M26 24h29v14H26z" fill="#a6583a" />
        <path d="M28 24v14M33.500 24v14M47 24v14M52.500 24v14" stroke="#edb68c" strokeWidth="2" />
        <path d="M36 26h9v12h-9z" fill="#3a2238" />
        <path d="M30 7v9M36.500 8v8M43.500 8v8M50 7v9" stroke="#8b4a2c" strokeWidth="1.500" />
        <path d="M40 7v9" stroke="#5b2c1c" strokeWidth="2.500" />
        <path d="M60 38c0-9 2-16 4-23 5 2 10 6 12 10v13z" fill="#c99572" />
        <path d="M68 18c-1 6-1 14-3 20" stroke="#94583c" fill="none" />
      </svg>
    </div>
    <div className="w-[51px] pr-[4px] flex justify-center">
      <svg viewBox="0 0 16 16" className="w-4 h-4" fill="none" stroke="#fff">
        <path d="M1 .5v2h9v-2M1 15.500v-2h9v2M.5 5h10v6H.5zM13.500 1v14" />
        <path d="M12.500 6h3v2.500h-3z" fill="#fff" stroke="none" />
      </svg>
    </div>
    <TaskButton className="w-12" open>
      <svg viewBox="0 0 24 24" className="w-6 h-6">
        <circle cx="12" cy="12" r="12" fill="#1377cf" />
        <path d="M.3 10C1.500 3.500 6.500 0 12 0c7 0 12 5 12 10.500 0 4-3 6-6.500 6-3 0-4.500-1-3-3 1.500-2.500-.5-6-5-6S1.500 8.500.3 10z" fill="#2fb5c4" />
        <path d="M12 0c7 0 12 5 12 10.500 0 4-3 6-6.500 6-3 0-4.500-1-3-3C16 9 13 3 5 2.300 7 .8 9.500 0 12 0z" fill="#52cc78" />
        <path d="M9.500 10c-3 4 0 10 6 10.500 3 .3 5-1 6.500-2-3 5-8 6-12 5-6-2-7-10-.5-13.500z" fill="#0b57a8" />
        <path d="M14.500 13.500c-1.500 2 0 3 3 3 2.500 0 4-.7 5.300-2L22 18.500c-5 2-11 1-11.500-4 0-2 .5-3.500 1.500-4.500 2 .5 3 2 2.500 3.500z" fill="#00141e" />
      </svg>
    </TaskButton>
    <TaskButton className="w-[50px]" open>
      <svg viewBox="0 0 22 20" className="w-[22px] h-5">
        <path d="M0 1h8l2 2h12v16H0z" fill="#f5b63c" />
        <path d="M0 5h22v14H0z" fill="#ffd86b" />
        <path d="M4 19v-6l2-2h10l2 2v6h-4v-4H8v4z" fill="#3d9ad6" />
      </svg>
    </TaskButton>
    <TaskButton className="w-[48px]">
      <svg viewBox="0 0 24 24" className="w-6 h-6">
        <path d="M2 6l2-3 2 3 3-4 1 3 4-4c0 3 2 4 3 5l2-2c3 3 4 6 4 9 0 6-5 11-11 11S1 19 1 13c0-3 0-5 1-7z" fill="#ff7a1a" />
        <path d="M14 1c0 3 2 4 3 5l2-2c3 3 4 7 3 11-2-3-3-5-7-6s-3-5-1-8z" fill="#ffd43a" />
        <path d="M1 14c1 6 6 10 11 10s9-3 10.500-8c-3 4-7 5-11 4C6 19.500 3 17 1 14z" fill="#f5294f" />
        <circle cx="12" cy="13" r="5" fill="#7b45d1" />
        <path d="M6 9c3-1 4 1 7 1-1 2-4 1-4 4-2-1-3-3-3-5z" fill="#ff9c26" />
      </svg>
    </TaskButton>
    <TaskButton className="w-[50px]" open>
      <svg viewBox="0 0 24 24" className="w-6 h-6">
        <path d="M8 1h13v11H8zM7 13h14l2 4H9z" fill="#c8c8cf" />
        <path d="M10 3h9v7h-9z" fill="#1717d8" />
        <path d="M1 11l5-2 3 3v11H2z" fill="#f1f1f5" />
        <path d="M1 16h7v5H1z" fill="#2525d0" />
        <path d="M4 8l4-2 2 4M14 23l6-3M12 20l10-2" stroke="#ddd" strokeWidth="1.500" fill="none" />
      </svg>
    </TaskButton>
    <TaskButton className="w-12" open active>
      <svg viewBox="0 0 22 18" className="w-[22px] h-[18px]">
        <path d="M0 0h22v18H0z" fill="#f2f4f5" />
        <path d="M1.500 4h10v11h-10z" fill="#4c998b" />
        <path d="M13 4h4M13 7h4M13 10h3M13 13h4" stroke="#bbb" />
        <path d="M19.500 2v8" stroke="#335" strokeWidth="1.500" />
      </svg>
    </TaskButton>
    <div className="ml-auto flex items-center">
      <Chevron className="w-3 h-[7px] rotate-180" />
      <svg viewBox="0 0 14 18" className="w-[14px] h-[18px] ml-[12px]" fill="none" stroke="#fff">
        <path d="M1.500 5.500h7v7h-7zM8.500 8l3-2v6l-3-2M3 2.500c2-2 5-2 7 0M3 15.500c2 2 5 2 7 0" />
      </svg>
      <svg viewBox="0 0 17 14" className="w-[17px] h-[14px] ml-[9px]" fill="none" stroke="#fff">
        <path d="M5 2.500h11.500v8H5M10 10.500v3M6 13.500h8M.5.5h4v4h-4zM2.500 4.500v9" />
      </svg>
      <svg viewBox="0 0 17 14" className="w-[17px] h-[14px] ml-[7px]" fill="none" stroke="#fff">
        <path d="M.5 5h2.500l4-3.500v11L3 9H.5zM9 5c1 1 1 3 0 4M11 3c2.200 2 2.200 6 0 8M13.500 1.200c3 3 3 8.600 0 11.600" />
      </svg>
      <div className="w-[72px] text-center text-[11.2px] leading-[17px] tracking-[-0.1px]">
        4:22 PM
        <br />
        10/19/2024
      </div>
      <svg viewBox="0 0 16 16" className="w-4 h-4 ml-[8px] mr-[20px]" fill="none" stroke="#fff">
        <path d="M.5.5h15v12h-5L8 15l-2.500-2.500h-5z" />
      </svg>
      <div className="w-px h-10 mr-[4px] bg-[#55606b]" />
    </div>
  </div>
);

export default function App() {
  return (
    <div className="relative w-[1280px] h-[720px] overflow-hidden flex flex-col bg-[#f7f7f7] font-['Open_Sans','Noto_Sans_CJK_JP',sans-serif]">
      <TabBar />
      <Toolbar />
      <WebPage />
      <Taskbar />
      <div className="absolute left-[1199px] top-[76px] w-[20px] h-[20px] rounded-full bg-[#f00a14] text-white text-[12px] leading-5 text-center font-['Liberation_Sans',sans-serif]">
        28
      </div>
      <DownloadsPopup />
      <ExplorerWindow />
      <ErrorDialog />
      <Watermark />
    </div>
  );
}
